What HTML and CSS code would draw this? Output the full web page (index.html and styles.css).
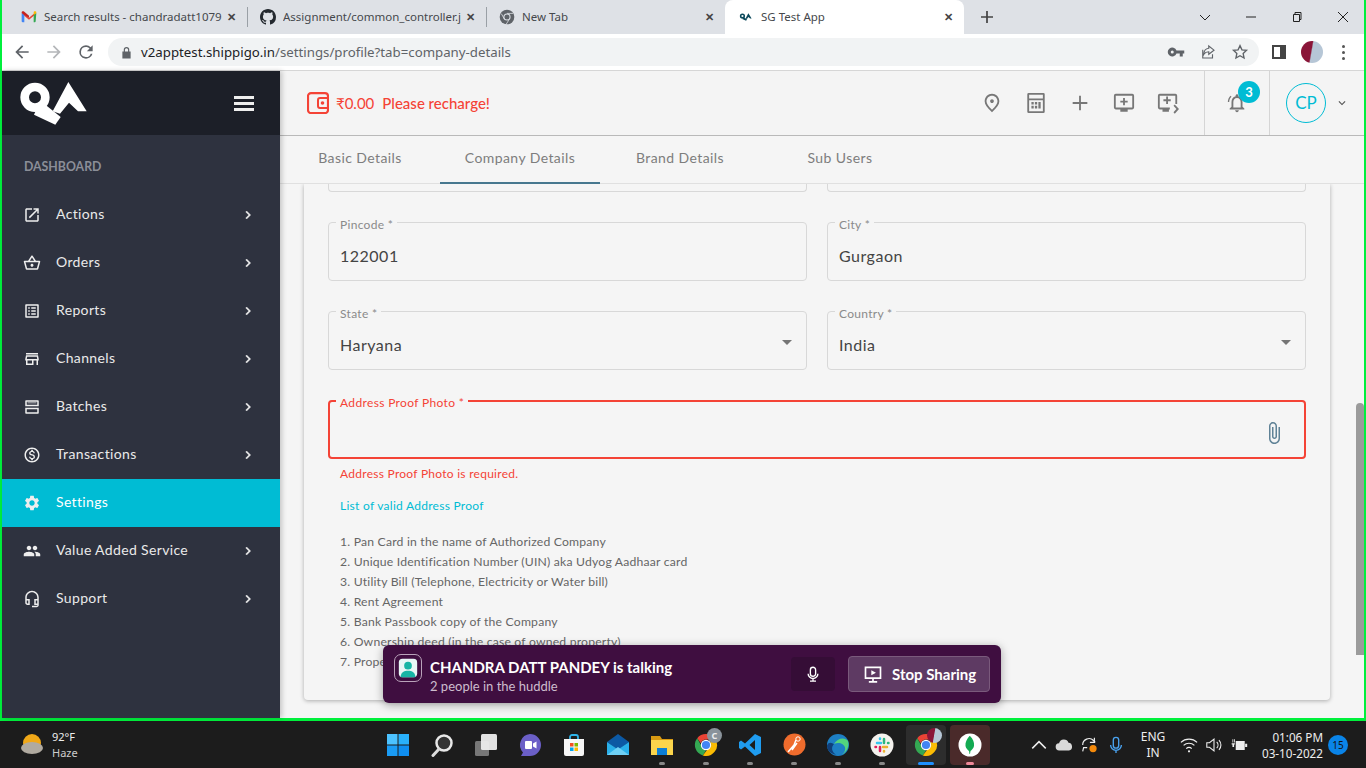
FILE: index.html
```html
<!DOCTYPE html>
<html lang="en">
<head>
  <meta charset="UTF-8">
  <title>SG Test App</title>
  <link rel="stylesheet" href="styles.css">
</head>
<body>
  <svg class="sprite" xmlns="http://www.w3.org/2000/svg">
    <symbol id="i-chevron" viewBox="0 0 24 24"><path d="M10 6L8.59 7.41 13.17 12l-4.58 4.59L10 18l6-6z"/></symbol>
    <symbol id="i-actions" viewBox="0 0 24 24"><path d="M19 19H5V5h7V3H5c-1.11 0-2 .9-2 2v14c0 1.1.89 2 2 2h14c1.1 0 2-.9 2-2v-7h-2v7zM14 3v2h3.59l-9.83 9.83 1.41 1.41L19 6.41V10h2V3h-7z"/></symbol>
    <symbol id="i-basket" viewBox="0 0 24 24"><path d="M22 9h-4.79l-4.38-6.56c-.19-.28-.51-.42-.83-.42s-.64.14-.83.43L6.79 9H2c-.55 0-1 .45-1 1 0 .09.01.18.04.27l2.54 9.27c.23.84 1 1.46 1.92 1.46h13c.92 0 1.69-.62 1.93-1.46l2.54-9.27L23 10c0-.55-.45-1-1-1zM12 4.8L14.8 9H9.2L12 4.8zM18.5 19l-12.99.01L3.31 11H20.7l-2.2 8zM12 13c-1.1 0-2 .9-2 2s.9 2 2 2 2-.9 2-2-.9-2-2-2z"/></symbol>
    <symbol id="i-reports" viewBox="0 0 24 24"><path d="M19 5v14H5V5h14m1.1-2H3.9c-.5 0-.9.4-.9.9v16.2c0 .4.4.9.9.9h16.2c.4 0 .9-.5.9-.9V3.9c0-.5-.5-.9-.9-.9zM11 7h6v2h-6V7zm0 4h6v2h-6v-2zm0 4h6v2h-6zM7 7h2v2H7zm0 4h2v2H7zm0 4h2v2H7z"/></symbol>
    <symbol id="i-store" viewBox="0 0 24 24"><path d="M18.36 9l.6 3H5.04l.6-3h12.72M20 4H4v2h16V4zm0 3H4l-1 5v2h1v6h10v-6h4v6h2v-6h1v-2l-1-5zM6 18v-4h6v4H6z"/></symbol>
    <symbol id="i-batches" viewBox="0 0 24 24"><path d="M4 3h16a1 1 0 0 1 1 1v7H3V4a1 1 0 0 1 1-1zM3 13h18v7a1 1 0 0 1-1 1H4a1 1 0 0 1-1-1zm2 2v4h14v-4zM5 5v4h14V5z" fill-rule="evenodd"/><path d="M6 6h12v1H6z"/></symbol>
    <symbol id="i-money" viewBox="0 0 24 24"><path d="M12 2C6.48 2 2 6.48 2 12s4.48 10 10 10 10-4.48 10-10S17.52 2 12 2zm0 18c-4.41 0-8-3.59-8-8s3.59-8 8-8 8 3.59 8 8-3.59 8-8 8zm.31-8.86c-1.77-.45-2.34-.94-2.34-1.67 0-.84.79-1.43 2.1-1.43 1.38 0 1.9.66 1.94 1.64h1.71c-.05-1.34-.87-2.57-2.49-2.97V5H10.9v1.69c-1.51.32-2.72 1.3-2.72 2.81 0 1.79 1.49 2.69 3.66 3.21 1.95.46 2.34 1.15 2.34 1.87 0 .53-.39 1.39-2.1 1.39-1.6 0-2.23-.72-2.32-1.64H8.04c.1 1.7 1.36 2.66 2.86 2.97V19h2.34v-1.67c1.52-.29 2.72-1.16 2.73-2.77-.01-2.2-1.9-2.96-3.66-3.42z"/></symbol>
    <symbol id="i-settings" viewBox="0 0 24 24"><path d="M19.14 12.94c.04-.3.06-.61.06-.94 0-.32-.02-.64-.07-.94l2.03-1.58c.18-.14.23-.41.12-.61l-1.92-3.32c-.12-.22-.37-.29-.59-.22l-2.39.96c-.5-.38-1.03-.7-1.62-.94l-.36-2.54c-.04-.24-.24-.41-.48-.41h-3.84c-.24 0-.43.17-.47.41l-.36 2.54c-.59.24-1.13.57-1.62.94l-2.39-.96c-.22-.08-.47 0-.59.22L2.74 8.87c-.12.21-.08.47.12.61l2.03 1.58c-.05.3-.09.63-.09.94s.02.64.07.94l-2.03 1.58c-.18.14-.23.41-.12.61l1.92 3.32c.12.22.37.29.59.22l2.39-.96c.5.38 1.03.7 1.62.94l.36 2.54c.05.24.24.41.48.41h3.84c.24 0 .44-.17.47-.41l.36-2.54c.59-.24 1.13-.56 1.62-.94l2.39.96c.22.08.47 0 .59-.22l1.92-3.32c.12-.22.07-.47-.12-.61l-2.01-1.58zM12 15.6c-1.98 0-3.6-1.62-3.6-3.6s1.62-3.6 3.6-3.6 3.6 1.62 3.6 3.6-1.62 3.6-3.6 3.6z"/></symbol>
    <symbol id="i-people" viewBox="0 0 24 24"><path d="M16 11c1.66 0 2.99-1.34 2.99-3S17.66 5 16 5c-1.66 0-3 1.34-3 3s1.34 3 3 3zm-8 0c1.66 0 2.99-1.34 2.99-3S9.66 5 8 5C6.34 5 5 6.34 5 8s1.34 3 3 3zm0 2c-2.33 0-7 1.17-7 3.5V19h14v-2.5c0-2.33-4.67-3.5-7-3.5zm8 0c-.29 0-.62.02-.97.05 1.16.84 1.97 1.97 1.97 3.45V19h6v-2.5c0-2.33-4.67-3.5-7-3.5z"/></symbol>
    <symbol id="i-headset" viewBox="0 0 24 24"><path d="M19 14v4h-2v-4h2M7 14v4H6c-.55 0-1-.45-1-1v-3h2m5-13c-4.97 0-9 4.03-9 9v7c0 1.66 1.34 3 3 3h3v-8H5v-2c0-3.87 3.13-7 7-7s7 3.13 7 7v2h-4v8h4v1h-7v2h6c1.66 0 3-1.34 3-3V10c0-4.97-4.03-9-9-9z"/></symbol>
    <symbol id="i-chrome" viewBox="0 0 24 24">
      <path fill="#ea4335" d="M12 1a11 11 0 0 1 9.53 5.5H12a5.5 5.5 0 0 0-5.2 3.7L3.2 5.2A11 11 0 0 1 12 1z"/>
      <path fill="#34a853" d="M3.2 5.2l4.6 8.4A5 5 0 0 0 12 17.5l-3.2 5A11 11 0 0 1 3.2 5.2z"/>
      <path fill="#fbbc04" d="M21.53 6.5A11 11 0 0 1 8.8 22.5l4.6-6a5 5 0 0 0 2.6-8z"/>
      <circle cx="12" cy="12" r="5.2" fill="#fff"/><circle cx="12" cy="12" r="4.1" fill="#4285f4"/>
    </symbol>
    <symbol id="i-chrome-grey" viewBox="0 0 24 24">
      <circle cx="12" cy="12" r="11" fill="#5f6368"/><circle cx="12" cy="12" r="5.4" fill="#dee1e6"/><circle cx="12" cy="12" r="3.8" fill="#5f6368"/>
      <path d="M12 6.6h9M8 15l-4.5-8M14.7 16.700l-4.500 7" stroke="#dee1e6" stroke-width="1.200"/>
    </symbol>
    <symbol id="i-qa" viewBox="0 0 270 186">
      <circle cx="75" cy="76" r="31" fill="none" stroke="currentColor" stroke-width="26"/>
      <path d="M108 100l44 35-16 23-64-30 6-14z" fill="currentColor"/>
      <path d="M175 30l55 88-26 0-27-26-27 33-22-7z" fill="currentColor"/>
    </symbol>
  </svg>

  <div class="window">
    <div class="tabstrip">
      <div class="tab">
        <svg class="favicon" viewBox="0 0 24 24"><path fill="#ea4335" d="M2 5l10 8 10-8v3l-10 8L2 8z"/><path fill="#4285f4" d="M1 6l4 3v11H2.500A1.500 1.500 0 0 1 1 18.500z"/><path fill="#34a853" d="M23 6l-4 3v11h1.500a1.500 1.500 0 0 0 1.500-1.500z"/><path fill="#fbbc04" d="M19 9l4-3V5a2 2 0 0 0-3-1.500L19 4.500z"/><path fill="#c5221f" d="M5 9L1 6V5a2 2 0 0 1 3-1.500l8 6.500v3z"/></svg>
        <span class="tab-title">Search results - chandradatt1079</span>
        <span class="tab-close">✕</span>
      </div>
      <div class="tab tab-sep">
        <svg class="favicon" viewBox="0 0 16 16"><path fill="#24292f" d="M8 0C3.580 0 0 3.580 0 8c0 3.540 2.290 6.530 5.470 7.590.4.070.55-.17.55-.38 0-.19-.01-.82-.01-1.490-2.010.37-2.530-.49-2.690-.94-.09-.23-.48-.94-.82-1.130-.28-.15-.68-.52-.01-.53.63-.01 1.080.58 1.230.82.720 1.210 1.870.87 2.330.66.070-.52.280-.87.510-1.070-1.780-.2-3.640-.89-3.640-3.950 0-.87.310-1.590.820-2.150-.08-.2-.36-1.020.08-2.120 0 0 .67-.21 2.200.82.640-.18 1.320-.27 2-.27s1.360.09 2 .27c1.530-1.040 2.200-.82 2.200-.82.440 1.100.160 1.920.080 2.120.51.560.82 1.270.82 2.150 0 3.070-1.870 3.750-3.650 3.950.29.250.54.730.54 1.480 0 1.070-.01 1.930-.01 2.200 0 .21.150.46.550.38A8.010 8.010 0 0 0 16 8c0-4.420-3.580-8-8-8z"/></svg>
        <span class="tab-title">Assignment/common_controller.j</span>
        <span class="tab-close">✕</span>
      </div>
      <div class="tab tab-sep">
        <svg class="favicon"><use href="#i-chrome-grey"/></svg>
        <span class="tab-title">New Tab</span>
        <span class="tab-close">✕</span>
      </div>
      <div class="tab tab-active">
        <svg class="favicon favicon-qa"><use href="#i-qa"/></svg>
        <span class="tab-title">SG Test App</span>
        <span class="tab-close">✕</span>
      </div>
      <svg class="new-tab" viewBox="0 0 14 14"><path d="M6 0h2v6h6v2H8v6H6V8H0V6h6z"/></svg>
      <div class="win-controls">
        <svg viewBox="0 0 12 12"><path d="M1 4l5 5 5-5" fill="none" stroke="#222"/></svg>
        <svg viewBox="0 0 12 12"><path d="M1 6h10" stroke="#222"/></svg>
        <svg viewBox="0 0 12 12"><path d="M2.500 3.500h6v7h-6zM4 3.500V1.500h6v7H8.500" fill="none" stroke="#222"/></svg>
        <svg viewBox="0 0 12 12"><path d="M1 1l10 10M11 1L1 11" stroke="#222"/></svg>
      </div>
    </div>

    <div class="toolbar">
      <svg class="nav-icon" viewBox="0 0 24 24"><path fill="#5f6368" d="M20 11H7.830l5.590-5.590L12 4l-8 8 8 8 1.410-1.410L7.830 13H20z"/></svg>
      <svg class="nav-icon" viewBox="0 0 24 24"><path fill="#b4b6b9" d="M12 4l-1.410 1.410L16.170 11H4v2h12.170l-5.580 5.590L12 20l8-8z"/></svg>
      <svg class="nav-icon" viewBox="0 0 24 24"><path fill="#5f6368" d="M17.650 6.350A7.960 7.960 0 0 0 12 4a8 8 0 1 0 7.730 10h-2.080A6 6 0 1 1 12 6c1.660 0 3.140.69 4.220 1.780L13 11h7V4z"/></svg>
      <div class="omnibox">
        <svg class="lock" viewBox="0 0 12 14"><path fill="#5f6368" d="M3 6V4a3 3 0 0 1 6 0v2h1.500v7.500h-9V6zm1.300 0h3.400V4a1.700 1.700 0 0 0-3.400 0z"/></svg>
        <span class="url">v2apptest.shippigo.in<span class="url-path">/settings/profile?tab=company-details</span></span>
        <svg class="omni-icon omni-key" viewBox="0 0 24 24"><path fill="#5f6368" d="M12.650 10A6 6 0 1 0 12.650 14H17v4h4v-4h2v-4zM7 14a2 2 0 1 1 0-4 2 2 0 0 1 0 4z"/></svg>
        <svg class="omni-icon" viewBox="0 0 24 24"><path fill="none" stroke="#5f6368" stroke-width="1.500" d="M5 9v11h13v-5M13 4l7 5.500-7 5.500v-3.300c-3 0-5 1-6.500 3.300 0-4 2-7.500 6.500-8z"/></svg>
        <svg class="omni-icon" viewBox="0 0 24 24"><path fill="none" stroke="#5f6368" stroke-width="1.800" d="M12 3.500l2.600 5.600 6.100.7-4.500 4.200 1.200 6-5.400-3-5.400 3 1.200-6-4.500-4.200 6.100-.7z"/></svg>
      </div>
      <span class="side-panel"></span>
      <span class="profile-pic"></span>
      <span class="kebab"><i></i><i></i><i></i></span>
    </div>

    <div class="app">
      <aside class="sidebar">
        <div class="brand">
          <svg class="brand-logo"><use href="#i-qa"/></svg>
          <span class="burger"><i></i><i></i><i></i></span>
        </div>
        <div class="menu-title">DASHBOARD</div>
        <nav class="menu">
          <a class="menu-item"><svg class="menu-icon"><use href="#i-actions"/></svg>Actions<svg class="menu-arrow"><use href="#i-chevron"/></svg></a>
          <a class="menu-item"><svg class="menu-icon"><use href="#i-basket"/></svg>Orders<svg class="menu-arrow"><use href="#i-chevron"/></svg></a>
          <a class="menu-item"><svg class="menu-icon"><use href="#i-reports"/></svg>Reports<svg class="menu-arrow"><use href="#i-chevron"/></svg></a>
          <a class="menu-item"><svg class="menu-icon"><use href="#i-store"/></svg>Channels<svg class="menu-arrow"><use href="#i-chevron"/></svg></a>
          <a class="menu-item"><svg class="menu-icon"><use href="#i-batches"/></svg>Batches<svg class="menu-arrow"><use href="#i-chevron"/></svg></a>
          <a class="menu-item"><svg class="menu-icon"><use href="#i-money"/></svg>Transactions<svg class="menu-arrow"><use href="#i-chevron"/></svg></a>
          <a class="menu-item menu-active"><svg class="menu-icon"><use href="#i-settings"/></svg>Settings</a>
          <a class="menu-item"><svg class="menu-icon"><use href="#i-people"/></svg>Value Added Service<svg class="menu-arrow"><use href="#i-chevron"/></svg></a>
          <a class="menu-item"><svg class="menu-icon"><use href="#i-headset"/></svg>Support<svg class="menu-arrow"><use href="#i-chevron"/></svg></a>
        </nav>
      </aside>

      <main class="main">
        <header class="topbar">
          <svg class="wallet" viewBox="0 0 22 22"><path fill="none" stroke="#f44336" stroke-width="2.200" d="M4 1.100h14a3 3 0 0 1 3 3v14a3 3 0 0 1-3 3H4a3 3 0 0 1-3-3v-14a3 3 0 0 1 3-3z"/><path fill="none" stroke="#f44336" stroke-width="2" d="M21 6h-8a2 2 0 0 0-2 2v6a2 2 0 0 0 2 2h8"/><circle cx="15.500" cy="11" r="1.800" fill="#f44336"/></svg>
          <span class="balance">₹0.00</span>
          <span class="recharge">Please recharge!</span>
          <div class="top-actions">
            <svg class="top-icon" viewBox="0 0 24 24"><path d="M12 12c-1.100 0-2-.9-2-2s.9-2 2-2 2 .9 2 2-.9 2-2 2zm6-1.800C18 6.570 15.350 4 12 4s-6 2.570-6 6.200c0 2.340 1.950 5.440 6 9.140 4.050-3.700 6-6.800 6-9.140zM12 2c4.200 0 8 3.220 8 8.200 0 3.320-2.670 7.250-8 11.800-5.330-4.550-8-8.480-8-11.800C4 5.220 7.800 2 12 2z"/></svg>
            <svg class="top-icon" viewBox="0 0 24 24"><path d="M4 1h16a1.500 1.500 0 0 1 1.500 1.500v19A1.500 1.500 0 0 1 20 23H4a1.500 1.500 0 0 1-1.500-1.500v-19A1.500 1.500 0 0 1 4 1zm.500 2v4h15V3zm0 6v12h15V9zM7 11h2.500v2.500H7zm3.800 0h2.500v2.500h-2.500zm3.800 0h2.500v7h-2.500zM7 15h2.500v3H7zm3.800 0h2.500v3h-2.500z"/></svg>
            <svg class="top-icon" viewBox="0 0 24 24"><path d="M11 4h2v7h7v2h-7v7h-2v-7H4v-2h7z"/></svg>
            <svg class="top-icon" viewBox="0 0 24 24"><path d="M3 2h18a2 2 0 0 1 2 2v13a2 2 0 0 1-2 2h-5v2.500H8V19H3a2 2 0 0 1-2-2V4a2 2 0 0 1 2-2zm0 2v13h18V4zm8 2.500h2v3h3v2h-3v3h-2v-3H8v-2h3z"/></svg>
            <svg class="top-icon" viewBox="0 0 24 24"><path d="M3 2h17a2 2 0 0 1 2 2v9h-2V4H3v13h11v2h-1v2.500H6V19H3a2 2 0 0 1-2-2V4a2 2 0 0 1 2-2zm7 3h2v3h3v2h-3v3h-2v-3H7V8h3zM18 15l1.400-1.400 4.600 5-4.600 5L18 22.200l3.200-3.600z"/></svg>
          </div>
          <div class="bell-box">
            <svg class="bell" viewBox="0 0 24 24"><path d="M12 22c1.100 0 2-.9 2-2h-4c0 1.100.9 2 2 2zm6-6v-5c0-3.070-1.630-5.640-4.500-6.320V4c0-.83-.67-1.500-1.500-1.500s-1.500.67-1.500 1.500v.68C7.640 5.360 6 7.920 6 11v5l-2 2v1h16v-1l-2-2zm-2 1H8v-6c0-2.480 1.510-4.500 4-4.500s4 2.020 4 4.500v6z"/><path d="M2 11c0-3 1.200-5.400 3-7l1 1.200C4.500 6.500 3.500 8.500 3.500 11zM22 11c0-3-1.200-5.400-3-7l-1 1.200c1.500 1.300 2.500 3.300 2.500 5.800z"/></svg>
            <span class="bell-count">3</span>
          </div>
          <div class="user-box">
            <span class="user-avatar">CP</span>
            <svg class="user-caret" viewBox="0 0 24 24"><path d="M16.590 8.590L12 13.170 7.410 8.590 6 10l6 6 6-6z"/></svg>
          </div>
        </header>

        <div class="page-tabs">
          <a class="page-tab">Basic Details</a>
          <a class="page-tab page-tab-active">Company Details</a>
          <a class="page-tab">Brand Details</a>
          <a class="page-tab">Sub Users</a>
        </div>

        <div class="content">
          <section class="card">
            <div class="field-row">
              <div class="field-cut"></div>
              <div class="field-cut"></div>
            </div>
            <div class="field-row">
              <div class="field"><label class="field-label">Pincode *</label><span class="field-value">122001</span></div>
              <div class="field"><label class="field-label">City *</label><span class="field-value">Gurgaon</span></div>
            </div>
            <div class="field-row">
              <div class="field"><label class="field-label">State *</label><span class="field-value">Haryana</span><span class="select-arrow"></span></div>
              <div class="field"><label class="field-label">Country *</label><span class="field-value">India</span><span class="select-arrow"></span></div>
            </div>
            <div class="field-row">
              <div class="field field-error">
                <label class="field-label">Address Proof Photo *</label>
                <svg class="clip" viewBox="0 0 24 24"><path d="M16.500 6v11.500c0 2.210-1.790 4-4 4s-4-1.790-4-4V5c0-1.380 1.120-2.500 2.500-2.500s2.500 1.120 2.500 2.500v10.500c0 .55-.45 1-1 1s-1-.45-1-1V6H10v9.500c0 1.380 1.120 2.500 2.500 2.500s2.500-1.120 2.500-2.500V5c0-2.210-1.790-4-4-4S7 2.790 7 5v12.500c0 3.040 2.460 5.500 5.500 5.500s5.500-2.460 5.500-5.500V6h-1.500z"/></svg>
              </div>
            </div>
            <p class="error-text">Address Proof Photo is required.</p>
            <a class="proof-link">List of valid Address Proof</a>
            <ol class="proof-list">
              <li>1. Pan Card in the name of Authorized Company</li>
              <li>2. Unique Identification Number (UIN) aka Udyog Aadhaar card</li>
              <li>3. Utility Bill (Telephone, Electricity or Water bill)</li>
              <li>4. Rent Agreement</li>
              <li>5. Bank Passbook copy of the Company</li>
              <li>6. Ownership deed (in the case of owned property)</li>
              <li>7. Prope</li>
            </ol>
          </section>
          <div class="scroll-thumb"></div>
        </div>
      </main>
    </div>

    <!-- huddle popup floats over the page -->
    <div class="huddle">
      <span class="huddle-avatar"><svg viewBox="0 0 24 24"><rect x="2" y="2" width="20" height="20" rx="4" fill="#e8f7f6"/><circle cx="12" cy="9.500" r="4.200" fill="#18b5a5"/><path d="M4 22c0-5 3.500-7 8-7s8 2 8 7z" fill="#18b5a5"/></svg></span>
      <div class="huddle-text">
        <div class="huddle-name">CHANDRA DATT PANDEY is talking</div>
        <div class="huddle-sub">2 people in the huddle</div>
      </div>
      <span class="huddle-mic"><svg viewBox="0 0 24 24"><path fill="none" stroke="#fff" stroke-width="1.800" d="M12 3a3.500 3.500 0 0 1 3.500 3.500v5a3.500 3.500 0 0 1-7 0v-5A3.500 3.500 0 0 1 12 3zM5.500 11.500a6.500 6.500 0 0 0 13 0M12 18v3M8 21.500h8"/></svg></span>
      <span class="huddle-stop"><svg viewBox="0 0 24 24"><path fill="none" stroke="#fff" stroke-width="2" d="M3 4h18v13H3zM12 17v4M7 21.500h10"/><path fill="#fff" d="M10 7.500l5.500 3-5.500 3z"/></svg>Stop Sharing</span>
    </div>
  </div>

  <footer class="taskbar">
    <div class="weather">
      <svg class="weather-icon" viewBox="0 0 24 24"><circle cx="12" cy="10" r="9" fill="#f0a818"/><ellipse cx="12" cy="15" rx="11" ry="6" fill="#b0aaa0"/></svg>
      <div><div>92°F</div><div class="weather-sub">Haze</div></div>
    </div>
    <div class="task-icons">
      <span class="task-slot"><svg viewBox="0 0 24 24"><path fill="#4cc2ff" d="M1 1h10.500v10.500H1z"/><path fill="#29b0fb" d="M12.500 1H23v10.500H12.500z"/><path fill="#1a9cf5" d="M1 12.500h10.500V23H1z"/><path fill="#0f8ef0" d="M12.500 12.500H23V23H12.500z"/></svg></span>
      <span class="task-slot"><svg viewBox="0 0 24 24"><circle cx="14" cy="10" r="7.500" fill="#333" stroke="#e8e8e8" stroke-width="2.500"/><path d="M9 16l-6 6.500" stroke="#ddd" stroke-width="3" stroke-linecap="round"/></svg></span>
      <span class="task-slot"><svg viewBox="0 0 24 24"><rect x="1" y="8" width="14" height="15" rx="1.500" fill="#777"/><rect x="7" y="1" width="16" height="16" rx="1.500" fill="#ececec" opacity=".95"/></svg></span>
      <span class="task-slot"><svg viewBox="0 0 24 24"><path fill="#6b5fc7" d="M12 1a11 11 0 0 1 0 22H3l2-3.500A11 11 0 0 1 12 1z"/><rect x="7" y="8" width="7" height="8" rx="1" fill="#fff"/><path fill="#fff" d="M15 10.500l3.500-2v7l-3.500-2z"/></svg></span>
      <span class="task-slot"><svg viewBox="0 0 24 24"><path fill="none" stroke="#2fb3e8" stroke-width="1.800" d="M8 6V4a2 2 0 0 1 2-2h4a2 2 0 0 1 2 2v2"/><path fill="#f6f6f6" d="M2 6h20v15a2 2 0 0 1-2 2H4a2 2 0 0 1-2-2z"/><path fill="#f25022" d="M8 10h3.500v3.500H8z"/><path fill="#7fba00" d="M12.500 10H16v3.500h-3.500z"/><path fill="#00a4ef" d="M8 14.500h3.500V18H8z"/><path fill="#ffb900" d="M12.500 14.500H16V18h-3.500z"/></svg></span>
      <span class="task-slot"><svg viewBox="0 0 24 24"><path fill="#0c59a4" d="M1 9l11-8 11 8-11 8z"/><path fill="#29b0ea" d="M1 9l11 7.500L23 9v13H1z"/><path fill="#6fd0f5" d="M1 22l11-8 11 8z"/></svg></span>
      <span class="task-slot task-open"><svg viewBox="0 0 24 24"><path fill="#d89a12" d="M1 3h9l2 3h11v5H1z"/><path fill="#fbd54c" d="M1 7h22v15H1z"/><path fill="#0d7fd6" d="M7 15h10v7H7z"/></svg></span>
      <span class="task-slot task-open"><svg><use href="#i-chrome"/></svg><b class="task-badge">C</b></span>
      <span class="task-slot task-open"><svg viewBox="0 0 24 24"><path fill="#1f9cf0" d="M17 1l6 3v16l-6 3-10-9.500L3 16.500 1 15V9l2-1.500 4 3zM17 7l-5.500 5L17 17z"/></svg></span>
      <span class="task-slot task-open"><svg viewBox="0 0 24 24"><circle cx="12.500" cy="11.500" r="11" fill="#ef6c2d"/><path d="M6 19l6-7 2-5M10 17l5-7" stroke="#fff" stroke-width="1.500" fill="none"/><circle cx="16" cy="6" r="2.200" fill="none" stroke="#fff"/></svg></span>
      <span class="task-slot task-open"><svg viewBox="0 0 24 24"><circle cx="12" cy="12" r="11" fill="#1d7fc4"/><path fill="#52d47e" d="M22 8c1.500 5-1 11-6 13.500 3-2 3.500-5 3-7C18 11 13 8.500 8 11c3-6 11-7.500 14-3z"/><path fill="#103f7a" d="M8 11c-3 3-2.500 8 2 10.500-5-.5-9-4-9-9C3 8 6 10 8 11z"/></svg></span>
      <span class="task-slot task-open"><svg viewBox="0 0 24 24"><circle cx="12" cy="12" r="11.500" fill="#f4f2ee"/><path stroke="#36c5f0" stroke-width="2.500" stroke-linecap="round" d="M7 10h4M10 5.500v.500"/><path stroke="#2eb67d" stroke-width="2.500" stroke-linecap="round" d="M14 6v4M18 10h.500"/><path stroke="#ecb22e" stroke-width="2.500" stroke-linecap="round" d="M17 14h-4M14 18.500V18"/><path stroke="#e01e5a" stroke-width="2.500" stroke-linecap="round" d="M10 18v-4M6 14h-.500"/></svg></span>
      <span class="task-slot task-active"><svg><use href="#i-chrome"/></svg><b class="task-pic"></b></span>
      <span class="task-slot task-mongo"><svg viewBox="0 0 24 24"><circle cx="12" cy="12" r="11.500" fill="#fff"/><path fill="#13aa52" d="M12 3c3 3 4.500 6 4 10-.4 2.500-2.500 4-3.500 5l-.5 3h-.5l-.5-3c-1-1-3.100-2.500-3.500-5-.5-4 1.500-7 4-10z"/></svg></span>
    </div>
    <div class="tray">
      <svg class="tray-icon" viewBox="0 0 16 16"><path d="M2 11l6-6 6 6" fill="none" stroke="#eee" stroke-width="1.300"/></svg>
      <svg class="tray-icon" viewBox="0 0 20 16"><path fill="#d9d9d9" d="M5 14a4 4 0 0 1-.5-8A5.500 5.500 0 0 1 15 5.500 4.300 4.300 0 0 1 15.500 14z"/></svg>
      <svg class="tray-icon" viewBox="0 0 20 20"><path fill="none" stroke="#eee" stroke-width="1.300" d="M3 10a7 7 0 0 1 12-5l2 2M16 2v5h-5M3 17l1-4h4"/><circle cx="14.500" cy="14" r="4" fill="#f58a0b"/></svg>
      <svg class="tray-icon tray-mic" viewBox="0 0 20 20"><path fill="none" stroke="#4aa3f0" stroke-width="1.500" d="M10 1.500a3 3 0 0 1 3 3v6a3 3 0 0 1-6 0v-6a3 3 0 0 1 3-3zM4 10a6 6 0 0 0 12 0M10 16v3"/></svg>
      <div class="tray-lang"><div>ENG</div><div>IN</div></div>
      <svg class="tray-icon" viewBox="0 0 20 20"><path fill="none" stroke="#eee" stroke-width="1.300" d="M1 7a13 13 0 0 1 18 0M4 10.500a8.500 8.500 0 0 1 12 0M7 14a4 4 0 0 1 6 0"/><circle cx="10" cy="17" r="1.200" fill="#eee"/></svg>
      <svg class="tray-icon" viewBox="0 0 20 20"><path fill="none" stroke="#eee" stroke-width="1.200" d="M2 7.500h3L10 3.500v13l-5-4H2zM13 6.500a5 5 0 0 1 0 7M15.500 4.500a8 8 0 0 1 0 11"/></svg>
      <svg class="tray-icon" viewBox="0 0 22 20"><path fill="#eee" d="M7 5h11v11H7zM18.500 8.500H21v4h-2.500zM2 8h4v1.500H5v3H3v-3H2zM3 3h1v4H3zM5 3h1v4H5z"/></svg>
      <div class="clock"><div>01:06 PM</div><div>03-10-2022</div></div>
      <span class="notif-count">15</span>
    </div>
  </footer>
</body>
</html>
```

FILE: styles.css
```css
* {
  box-sizing: border-box;
}
html, body {
  margin: 0;
  height: 768px;
  overflow: hidden;
}
body {
  display: flex;
  flex-direction: column;
  font-family: Lato, "Noto Sans", sans-serif;
}
.sprite {
  display: none;
}
.window {
  position: relative;
  display: flex;
  flex-direction: column;
  height: 721px;
  border: 2px solid #00f03c;
  border-top: 0;
  border-bottom-width: 3px;
  background: #f5f5f5;
}

/* browser chrome */
.tabstrip {
  display: flex;
  align-items: flex-end;
  height: 34px;
  padding-left: 6px;
  background: #dee1e6;
  font-family: "Noto Sans", sans-serif;
}
.tab {
  position: relative;
  display: flex;
  align-items: center;
  width: 239px;
  height: 34px;
  padding: 0 7px 1px 13px;
  font-size: 11.500px;
  color: #45484c;
}
.tab-sep::before {
  content: "";
  position: absolute;
  left: 0;
  top: 7px;
  height: 20px;
  width: 1px;
  background: #9aa0a6;
}
.tab-active {
  background: #fff;
  border-radius: 8px 8px 0 0;
}
.favicon {
  flex: none;
  width: 16px;
  height: 16px;
  margin-right: 7px;
}
.favicon-qa {
  color: #0d4a5c;
}
.tab-title {
  flex: 1;
  overflow: hidden;
  white-space: nowrap;
}
.tab-close {
  flex: none;
  width: 18px;
  font-size: 11px;
  font-weight: 700;
  text-align: center;
  color: #444;
}
.new-tab {
  width: 12px;
  height: 12px;
  margin: 0 0 11px 17px;
  fill: #444;
}
.win-controls {
  display: flex;
  align-items: center;
  gap: 34px;
  height: 34px;
  margin-left: auto;
  padding-right: 15px;
  align-self: flex-start;
}
.win-controls svg {
  width: 12px;
  height: 12px;
}
.toolbar {
  display: flex;
  align-items: center;
  height: 37px;
  padding-left: 10px;
  background: #fff;
  border-bottom: 1px solid #d6d6d6;
}
.nav-icon {
  width: 20px;
  height: 20px;
  margin-right: 12px;
}
.omnibox {
  display: flex;
  align-items: center;
  width: 1151px;
  height: 28px;
  padding: 0 10px 0 13px;
  border-radius: 14px;
  background: #f1f3f4;
  font-family: "Noto Sans", sans-serif;
  font-size: 13.250px;
}
.lock {
  width: 11px;
  height: 13px;
  margin-right: 9px;
}
.url {
  flex: 1;
  color: #202124;
}
.url-path {
  color: #5f6368;
}
.omni-icon {
  width: 18px;
  height: 18px;
  margin-left: 14px;
}
.side-panel {
  width: 14px;
  height: 14px;
  margin-left: 13px;
  border: 2px solid #444;
  border-right-width: 6px;
}
.profile-pic {
  width: 22px;
  height: 22px;
  margin-left: 15px;
  border-radius: 50%;
  background: linear-gradient(100deg, #8a1538 0 45%, #b6c6d6 50%);
}
.kebab {
  display: flex;
  flex-direction: column;
  gap: 3px;
  margin-left: 19px;
}
.kebab i {
  width: 3px;
  height: 3px;
  border-radius: 50%;
  background: #555;
}

/* app layout */
.app {
  flex: 1;
  display: flex;
  min-height: 0;
  font-family: Lato, sans-serif;
}
.sidebar {
  position: relative;
  z-index: 2;
  flex: none;
  width: 278px;
  background: #2e323f;
  box-shadow: 2px 0 5px rgba(0, 0, 0, .2);
  color: #eaeaea;
}
.brand {
  display: flex;
  align-items: center;
  justify-content: space-between;
  height: 64px;
  padding: 0 26px 0 8px;
  background: #1c1f28;
}
.brand-logo {
  width: 90px;
  height: 62px;
  color: #fff;
}
.burger {
  display: flex;
  flex-direction: column;
  gap: 3px;
}
.burger i {
  width: 20px;
  height: 3px;
  background: #eee;
}
.menu-title {
  height: 56px;
  padding: 24px 0 0 22px;
  font-size: 12.300px;
  font-weight: 700;
  color: #8b8e98;
}
.menu-item {
  display: flex;
  align-items: center;
  height: 48px;
  padding: 0 24px 4px 21px;
  font-size: 14px;
  letter-spacing: .35px;
  color: #eaeaea;
}
.menu-active {
  background: #00bcd4;
  color: #fff;
}
.menu-icon {
  width: 18px;
  height: 18px;
  margin: 4px 15px 0 0;
  fill: #eee;
}
.menu-arrow {
  width: 16px;
  height: 16px;
  margin: 4px 0 0 auto;
  fill: #eee;
  stroke: #eee;
  stroke-width: .6px;
}

.main {
  flex: 1;
  display: flex;
  flex-direction: column;
  min-width: 0;
  font-family: Lato, sans-serif;
}
.topbar {
  display: flex;
  align-items: center;
  flex: none;
  height: 65px;
  padding-left: 27px;
  background: #f4f4f4;
  border-bottom: 1px solid #b9b9b9;
}
.wallet {
  width: 22px;
  height: 22px;
  margin-right: 7px;
}
.balance, .recharge {
  font-size: 15px;
  color: #f44336;
}
.recharge {
  margin-left: 8px;
  font-weight: 500;
}
.top-actions {
  display: flex;
  gap: 22px;
  margin-left: auto;
  padding-right: 25px;
}
.top-icon {
  width: 22px;
  height: 22px;
  fill: #777;
}
.bell-box {
  position: relative;
  display: flex;
  align-items: center;
  justify-content: center;
  width: 66px;
  height: 64px;
  border-left: 1px solid #d5d5d5;
  border-right: 1px solid #d5d5d5;
}
.bell {
  width: 22px;
  height: 22px;
  fill: #777;
}
.bell-count {
  position: absolute;
  top: 10px;
  left: 33px;
  width: 22px;
  height: 22px;
  border-radius: 50%;
  background: #00bcd4;
  color: #fff;
  font-size: 13px;
  font-weight: 700;
  line-height: 22px;
  text-align: center;
}
.user-box {
  display: flex;
  align-items: center;
  width: 94px;
  padding-left: 16px;
}
.user-avatar {
  width: 40px;
  height: 40px;
  border: 1px solid #00bcd4;
  border-radius: 50%;
  color: #00bcd4;
  font-size: 17px;
  line-height: 38px;
  text-align: center;
}
.user-caret {
  width: 14px;
  height: 14px;
  margin-left: 9px;
  fill: #555;
}
.page-tabs {
  display: flex;
  flex: none;
  height: 48px;
  background: #f5f5f5;
  border-bottom: 1px solid #e0e0e0;
}
.page-tab {
  width: 160px;
  padding-top: 13px;
  text-align: center;
  font-size: 14px;
  letter-spacing: .42px;
  color: #7d7d7d;
}
.page-tab-active {
  height: 48px;
  border-bottom: 2px solid #47788f;
}
.content {
  position: relative;
  flex: 1;
  min-height: 0;
  overflow: hidden;
  padding: 0 34px 0 24px;
}
.card {
  padding: 0 24px 28px;
  background: #f5f5f5;
  box-shadow: 0 1px 4px rgba(0, 0, 0, .3);
  border-radius: 0 0 4px 4px;
}
.field-row {
  display: flex;
  gap: 20px;
  margin-bottom: 30px;
}
.field-cut {
  flex: 1;
  height: 8px;
  border: 1px solid #d8d8d8;
  border-top: 0;
  border-radius: 0 0 4px 4px;
}
.field {
  position: relative;
  flex: 1;
  display: flex;
  align-items: center;
  height: 59px;
  padding: 8px 11px 0;
  border: 1px solid #d8d8d8;
  border-radius: 4px;
}
.field-label {
  position: absolute;
  left: 7px;
  top: -6px;
  padding: 0 4px;
  background: #f5f5f5;
  font-size: 12px;
  line-height: 16px;
  letter-spacing: .3px;
  color: #8a8a8a;
}
.field-value {
  font-size: 16px;
  letter-spacing: .5px;
  color: #444;
}
.select-arrow {
  position: absolute;
  right: 14px;
  top: 28px;
  border: 5px solid transparent;
  border-top-color: #757575;
  border-bottom: 0;
}
.field-error {
  border: 2px solid #f44336;
}
.field-error .field-label {
  left: 6px;
  top: -7px;
  letter-spacing: .35px;
  color: #f44336;
}
.clip {
  position: absolute;
  right: 18px;
  top: 19px;
  width: 24px;
  height: 24px;
  fill: #5f8296;
}
.error-text {
  margin: -23px 0 0 12px;
  font-size: 12px;
  line-height: 16px;
  letter-spacing: .27px;
  color: #f44336;
}
.proof-link {
  display: block;
  margin: 16px 0 0 12px;
  font-size: 12px;
  line-height: 16px;
  letter-spacing: .27px;
  color: #00bcd4;
}
.proof-list {
  margin: 18px 0 0 12px;
  padding: 0;
  list-style: none;
  font-size: 12.200px;
  line-height: 20px;
  letter-spacing: .2px;
  color: #666;
}
.scroll-thumb {
  position: absolute;
  right: 0;
  top: 219px;
  width: 8px;
  height: 252px;
  border-radius: 4px 4px 0 0;
  background: #9b9b9b;
}

/* huddle */
.huddle {
  position: absolute;
  z-index: 5;
  left: 381px;
  top: 645px;
  display: flex;
  align-items: center;
  width: 618px;
  height: 58px;
  padding: 0 11px;
  border-radius: 6px;
  background: #3f0e40;
  box-shadow: 0 2px 10px rgba(0, 0, 0, .35);
  color: #fff;
}
.huddle-avatar {
  width: 28px;
  height: 28px;
  margin-right: 8px;
  padding: 2px;
  border: 1px solid #b9a3ba;
  border-radius: 7px;
  margin-top: -13px;
}
.huddle-avatar svg {
  display: block;
  width: 22px;
  height: 22px;
}
.huddle-text {
  flex: 1;
  padding-top: 3px;
}
.huddle-name {
  font-size: 15px;
  font-weight: 700;
  line-height: 20px;
}
.huddle-sub {
  font-size: 13px;
  line-height: 18px;
  color: #cdbdce;
}
.huddle-mic {
  display: flex;
  align-items: center;
  justify-content: center;
  width: 44px;
  height: 34px;
  margin-right: 13px;
  border-radius: 4px;
  background: #350d36;
}
.huddle-mic svg {
  width: 18px;
  height: 18px;
}
.huddle-stop {
  display: flex;
  align-items: center;
  gap: 9px;
  width: 142px;
  height: 36px;
  padding-left: 14px;
  border: 1px solid #7a5a7c;
  border-radius: 4px;
  background: #5e3a63;
  font-size: 15px;
  font-weight: 700;
}
.huddle-stop svg {
  width: 20px;
  height: 20px;
}

/* windows taskbar */
.taskbar {
  flex: none;
  display: flex;
  align-items: center;
  height: 47px;
  background: #1c1c1c;
  color: #eee;
  font-family: "Noto Sans", sans-serif;
  font-size: 11px;
}
.weather {
  display: flex;
  align-items: center;
  gap: 8px;
  width: 376px;
  padding-left: 20px;
  line-height: 16px;
}
.weather-icon {
  width: 24px;
  height: 24px;
}
.weather-sub {
  color: #ccc;
}
.task-icons {
  display: flex;
}
.task-slot {
  position: relative;
  display: flex;
  align-items: center;
  justify-content: center;
  width: 44px;
  height: 40px;
}
.task-slot svg {
  width: 24px;
  height: 24px;
}
.task-open::after {
  content: "";
  position: absolute;
  bottom: 0;
  left: 19px;
  width: 6px;
  height: 3px;
  border-radius: 2px;
  background: #888;
}
.task-active {
  width: 40px;
  margin: 0 2px;
  border-radius: 4px;
  background: #2d2d2d;
}
.task-active::after {
  content: "";
  position: absolute;
  bottom: 0;
  left: 12px;
  width: 16px;
  height: 3px;
  border-radius: 2px;
  background: #1e90ff;
}
.task-mongo {
  width: 40px;
  margin: 0 2px;
  border-radius: 4px;
  background: #4a2a2a;
}
.task-mongo::after {
  content: "";
  position: absolute;
  bottom: 0;
  left: 16px;
  width: 8px;
  height: 3px;
  border-radius: 2px;
  background: #f08a9a;
}
.task-badge, .task-pic {
  position: absolute;
  top: 3px;
  right: 6px;
  width: 15px;
  height: 15px;
  border-radius: 50%;
  background: #8a939b;
  font-size: 9px;
  line-height: 15px;
  text-align: center;
  color: #eee;
}
.task-pic {
  right: 4px;
  background: linear-gradient(100deg, #8a1538 0 45%, #b6c6d6 50%);
}
.tray {
  display: flex;
  align-items: center;
  margin-left: auto;
  padding-right: 18px;
}
.tray-icon {
  width: 18px;
  height: 18px;
  margin-left: 7px;
}
.tray-mic {
  margin-left: 9px;
}
.tray-lang {
  width: 40px;
  margin-left: 8px;
  font-size: 12px;
  text-align: center;
  line-height: 16px;
}
.clock {
  margin-left: 14px;
  font-size: 11.700px;
  text-align: right;
  line-height: 16px;
}
.notif-count {
  width: 20px;
  height: 20px;
  margin-left: 5px;
  border-radius: 50%;
  background: #0a84e8;
  color: #111;
  font-size: 10px;
  line-height: 20px;
  text-align: center;
}
```
